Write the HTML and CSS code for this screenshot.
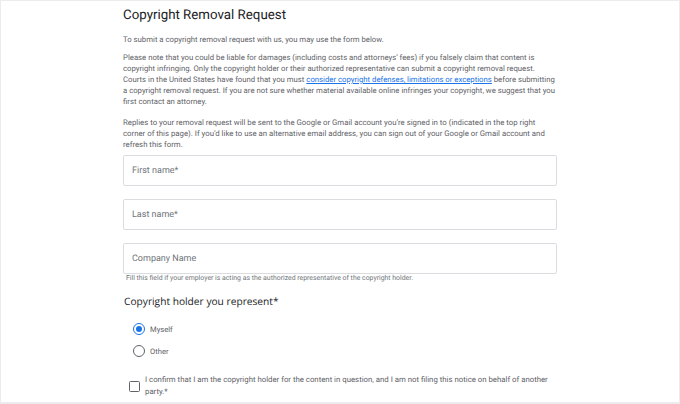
FILE: index.html
```html
<!DOCTYPE html>
<html>
<head>
<meta charset="utf-8">
<link rel="stylesheet" href="styles.css">
</head>
<body>
<div class="frame">
  <main class="form">
    <h1 class="title">Copyright Removal Request</h1>
    <p class="para first">To submit a copyright removal request with us, you may use the form below.</p>
    <p class="para second">Please note that you could be liable for damages (including costs and attorneys’ fees) if you falsely claim that content is copyright infringing. Only the copyright holder or their authorized representative can submit a copyright removal request. Courts in the United States have found that you must <a class="link" href="#">consider copyright defenses, limitations or exceptions</a> before submitting a copyright removal request. If you are not sure whether material available online infringes your copyright, we suggest that you first contact an attorney.</p>
    <p class="para third">Replies to your removal request will be sent to the Google or Gmail account you’re signed in to (indicated in the top right corner of this page). If you’d like to use an alternative email address, you can sign out of your Google or Gmail account and refresh this form.</p>

    <div class="fields">
      <div class="field"><span class="placeholder">First name*</span></div>
      <div class="field"><span class="placeholder">Last name*</span></div>
      <div class="field"><span class="placeholder">Company Name</span></div>
    </div>
    <div class="hint">Fill this field if your employer is acting as the authorized representative of the copyright holder.</div>

    <h2 class="section">Copyright holder you represent*</h2>
    <div class="radios">
      <div class="radio-row"><span class="radio checked"><span class="dot"></span></span><span class="radio-label">Myself</span></div>
      <div class="radio-row"><span class="radio"></span><span class="radio-label">Other</span></div>
    </div>
    <div class="check-row">
      <span class="checkbox"></span>
      <span class="check-label">I confirm that I am the copyright holder for the content in question, and I am not filing this notice on behalf of another party.*</span>
    </div>
  </main>
</div>
</body>
</html>
```

FILE: styles.css
```css
html, body {
  margin: 0;
  padding: 0;
  background: #ffffff;
}
body {
  font-family: Roboto, "Liberation Sans", Arial, sans-serif;
  color: #5f6368;
  text-rendering: geometricPrecision;
}
.frame {
  box-sizing: border-box;
  width: 680px;
  height: 404px;
  border: 1px solid #ececec;
  border-bottom-width: 2px;
  overflow: hidden;
}
.form {
  width: 434px;
  margin: 0 auto;
  padding-top: 5px;
}
.title {
  font-family: Roboto, "Open Sans", sans-serif;
  font-weight: 400;
  font-size: 13.3px;
  line-height: 20px;
  color: #202124;
  margin: 0 0 8px 0;
}
.para {
  font-size: 7.75px;
  line-height: 11px;
  margin: 0;
  color: #5f6368;
}
.para.first {
  margin-bottom: 7px;
}
.para.second {
  margin-bottom: 10px;
}
.para.third {
  font-size: 7.8px;
  margin-bottom: 5px;
}
.link {
  color: #1a73e8;
  text-decoration: underline;
}
.fields {
  display: flex;
  flex-direction: column;
  gap: 13px;
}
.field {
  box-sizing: border-box;
  height: 31px;
  border: 1px solid #dadce0;
  border-radius: 2px;
  display: flex;
  align-items: center;
  padding-left: 8px;
}
.placeholder {
  font-size: 9px;
  color: #70757a;
}
.hint {
  font-size: 6.9px;
  line-height: 9px;
  color: #70757a;
  padding-left: 3px;
  margin-top: 0;
}
.section {
  font-family: "Open Sans", Roboto, sans-serif;
  font-weight: 400;
  font-size: 10.2px;
  color: #202124;
  margin: 11px 0 0 1px;
  line-height: 14px;
}
.radios {
  display: flex;
  flex-direction: column;
  gap: 10px;
  padding-left: 10px;
  margin-top: 15px;
}
.radio-row {
  display: flex;
  align-items: center;
  gap: 5px;
}
.radio {
  box-sizing: border-box;
  width: 12px;
  height: 12px;
  border-radius: 50%;
  border: 1.3px solid #5f6368;
  display: flex;
  align-items: center;
  justify-content: center;
}
.radio.checked {
  border-color: #1a73e8;
}
.dot {
  width: 6px;
  height: 6px;
  border-radius: 50%;
  background: #1a73e8;
}
.radio-label {
  font-size: 7.6px;
  color: #5f6368;
}
.check-row {
  display: flex;
  align-items: center;
  gap: 5px;
  padding-left: 6px;
  margin-top: 17px;
}
.checkbox {
  flex: none;
  box-sizing: border-box;
  width: 11px;
  height: 11px;
  border: 1.3px solid #5f6368;
  border-radius: 1.5px;
}
.check-label {
  font-size: 7.8px;
  line-height: 12px;
  color: #5f6368;
  padding-right: 6px;
}
```
